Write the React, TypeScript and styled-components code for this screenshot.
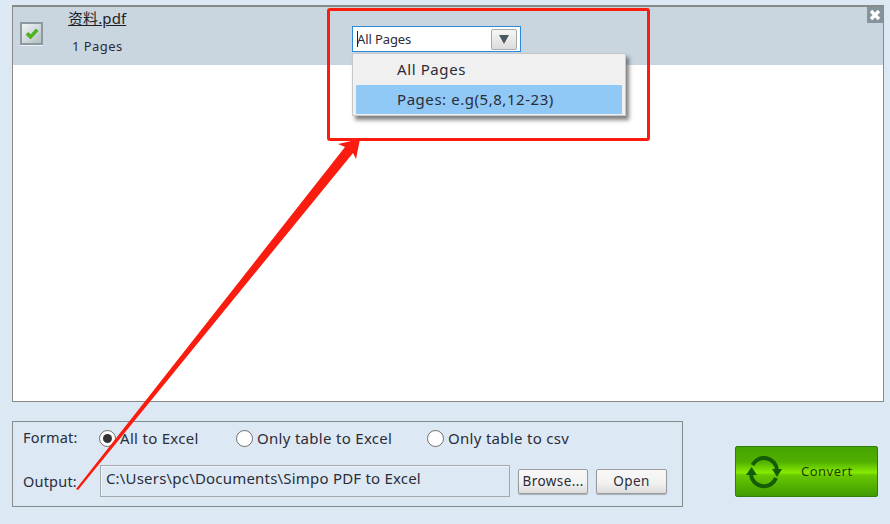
import React from 'react';
import styled, { createGlobalStyle } from 'styled-components';

const Global = createGlobalStyle`
  html, body { margin: 0; padding: 0; background: #dce9f4; }
  body { font-family: "Noto Sans", "Noto Sans CJK SC", sans-serif; color: #2c2c38; }
`;

const Page = styled.div`
  position: relative;
  width: 890px;
  height: 524px;
  overflow: hidden;
  box-sizing: border-box;
  padding: 5px 6px 0 12px;
  background: #dce9f4;
`;

const FileList = styled.div`
  height: 397px;
  box-sizing: border-box;
  background: #fff;
  border: 1px solid #8a8a8a;
  border-top-width: 2px;
`;

const FileRow = styled.div`
  position: relative;
  height: 58px;
  background: #c9d6e0;
  display: flex;
  align-items: flex-start;
`;

const CheckBox = styled.div`
  width: 23px;
  height: 23px;
  margin: 15px 0 0 7px;
  box-sizing: border-box;
  border: 2px solid #8c9aa0;
  background: linear-gradient(135deg, #f0f4f4, #b4c0c4);
  box-shadow: 0 1px 0 #eef3f6;
  display: flex;
  align-items: center;
  justify-content: center;
`;

const FileInfo = styled.div`
  margin-left: 25px;
  display: flex;
  flex-direction: column;
  align-items: flex-start;
`;

const FileName = styled.div`
  font-size: 15px;
  line-height: 18px;
  margin-top: 2px;
  color: #1e1e26;
  text-decoration: underline;
  letter-spacing: 0.1px;
`;

const PageCount = styled.div`
  font-size: 13px;
  line-height: 16px;
  margin: 11px 0 0 4px;
  letter-spacing: 0.45px;
`;

const CloseButton = styled.div`
  position: absolute;
  top: 0;
  right: 0;
  width: 16px;
  height: 16px;
  background: #85939b;
  display: flex;
  align-items: center;
  justify-content: center;
`;

const Select = styled.div`
  position: absolute;
  left: 339px;
  top: 19px;
  width: 169px;
  height: 26px;
  box-sizing: border-box;
  border: 1px solid #2a8ad8;
  background: #fff;
  display: flex;
  align-items: center;
  justify-content: space-between;
  padding: 0 3px 0 4px;
  font-size: 13px;
  letter-spacing: -0.1px;
`;

const Caret = styled.span`
  display: inline-block;
  width: 1px;
  height: 16px;
  background: #222;
  margin-right: -1px;
`;

const SelectText = styled.span`
  display: flex;
  align-items: center;
`;

const SelectArrow = styled.div`
  width: 26px;
  height: 21px;
  box-sizing: border-box;
  border: 1px solid #a8a8a8;
  border-radius: 2px;
  background: linear-gradient(#f6f6f6, #dcdcdc);
  display: flex;
  align-items: center;
  justify-content: center;
`;

const Menu = styled.div`
  position: absolute;
  left: 352px;
  top: 53px;
  width: 274px;
  height: 63px;
  box-sizing: border-box;
  background: #f0f0f0;
  border: 1px solid #c8c8c8;
  padding: 1px 3px 3px;
  box-shadow: 3px 4px 4px rgba(60, 60, 60, 0.65);
  z-index: 2;
`;

const MenuItem = styled.div<{ $active?: boolean }>`
  height: 29px;
  line-height: 29px;
  padding-left: 41px;
  font-size: 15px;
  letter-spacing: ${(p) => (p.$active ? '0.55px' : '0.6px')};
  background: ${(p) => (p.$active ? '#90c8f6' : 'transparent')};
  margin-top: ${(p) => (p.$active ? '1px' : '0')};
`;

const FormBox = styled.div`
  width: 671px;
  height: 86px;
  margin-top: 19px;
  box-sizing: border-box;
  border: 1px solid #85898c;
  padding: 3px 15px 0 10px;
  display: flex;
  flex-direction: column;
`;

const FormRow = styled.div`
  display: flex;
  align-items: center;
`;

const FormatRow = styled(FormRow)`
  height: 26px;
`;

const OutputRow = styled(FormRow)`
  height: 32px;
  margin-top: 14px;
`;

const Label = styled.div<{ $w: number; $up?: number }>`
  width: ${(p) => p.$w}px;
  font-size: 14.5px;
  letter-spacing: 0.2px;
  margin-top: ${(p) => p.$up ?? 0}px;
`;

const Radio = styled.div<{ $w: number }>`
  display: flex;
  align-items: center;
  width: ${(p) => p.$w}px;
  font-size: 15px;
  letter-spacing: 0.3px;
`;

const RadioDot = styled.span<{ $on?: boolean }>`
  width: 17px;
  height: 17px;
  box-sizing: border-box;
  margin-right: 4px;
  border-radius: 50%;
  border: 1.5px solid #6e6e6e;
  background: #fff;
  display: flex;
  align-items: center;
  justify-content: center;
  &::after {
    content: '';
    display: ${(p) => (p.$on ? 'block' : 'none')};
    width: 9px;
    height: 9px;
    border-radius: 50%;
    background: #333;
  }
`;

const PathBox = styled.div`
  width: 411px;
  height: 32px;
  box-sizing: border-box;
  border: 1px solid #a4a8ac;
  box-shadow: inset 1px 1px 0 #f2f6fa;
  background: #dce9f4;
  padding: 0 5px;
  font-size: 15px;
  line-height: 25px;
  letter-spacing: 0.2px;
  white-space: nowrap;
`;

const SmallButton = styled.div<{ $w: number }>`
  width: ${(p) => p.$w}px;
  height: 25px;
  margin-left: 8px;
  box-sizing: border-box;
  border: 1px solid #9a9a9a;
  border-radius: 2px;
  background: linear-gradient(#f8f8f8 0%, #f2f2f2 55%, #dcdcdc 100%);
  box-shadow: 0 1px 1px rgba(0, 0, 0, 0.25);
  font-size: 13.5px;
  letter-spacing: 0.4px;
  display: flex;
  align-items: center;
  justify-content: center;
`;

const ConvertButton = styled.div`
  position: absolute;
  left: 735px;
  top: 446px;
  width: 143px;
  height: 51px;
  box-sizing: border-box;
  border: 1px solid #2f7d0a;
  border-radius: 2px;
  background: linear-gradient(#45a400 0%, #50b000 30%, #86ea00 52%, #68c800 58%, #3f9c00 100%);
  display: flex;
  align-items: center;
  padding-left: 9px;
  color: #1f3c00;
  font-size: 13px;
  letter-spacing: 0.5px;
`;

const ConvertLabel = styled.span`
  margin-left: 18px;
  margin-top: -2px;
`;

const AnnotationBox = styled.div`
  position: absolute;
  left: 327px;
  top: 8px;
  width: 323px;
  height: 133px;
  box-sizing: border-box;
  border: 3px solid #fb1c10;
  border-radius: 3px;
  z-index: 3;
`;

const ArrowLayer = styled.svg`
  position: absolute;
  left: 0;
  top: 0;
  z-index: 4;
  pointer-events: none;
`;

export default function App() {
  return (
    <Page>
      <Global />
      <FileList>
        <FileRow>
          <CheckBox>
            <svg width="14" height="12" viewBox="0 0 14 12">
              <path d="M1 6.5 L3.5 4.5 L5.5 7 L11 1 L13 3 L5.5 11 Z" fill="#4cb814" stroke="#2f8a0a" strokeWidth="0.5" />
            </svg>
          </CheckBox>
          <FileInfo>
            <FileName>资料.pdf</FileName>
            <PageCount>1 Pages</PageCount>
          </FileInfo>
          <Select>
            <SelectText>
              <Caret />
              All Pages
            </SelectText>
            <SelectArrow>
              <svg width="10" height="9" viewBox="0 0 10 9">
                <path d="M0 0 H10 L5 9 Z" fill="#4a5860" />
              </svg>
            </SelectArrow>
          </Select>
          <CloseButton>
            <svg width="12" height="12" viewBox="0 0 12 12">
              <path d="M2 2 L10 10 M10 2 L2 10" stroke="#fff" strokeWidth="3.4" />
            </svg>
          </CloseButton>
        </FileRow>
      </FileList>
      <Menu>
        <MenuItem>All Pages</MenuItem>
        <MenuItem $active>Pages: e.g(5,8,12-23)</MenuItem>
      </Menu>
      <FormBox>
        <FormatRow>
          <Label $w={76} $up={-2}>Format:</Label>
          <Radio $w={137}>
            <RadioDot $on />
            All to Excel
          </Radio>
          <Radio $w={191}>
            <RadioDot />
            Only table to Excel
          </Radio>
          <Radio $w={170}>
            <RadioDot />
            Only table to csv
          </Radio>
        </FormatRow>
        <OutputRow>
          <Label $w={77}>Output:</Label>
          <PathBox>C:\Users\pc\Documents\Simpo PDF to Excel</PathBox>
          <SmallButton $w={70}>Browse...</SmallButton>
          <SmallButton $w={71}>Open</SmallButton>
        </OutputRow>
      </FormBox>
      <ConvertButton>
        <svg width="38" height="34" viewBox="0 0 38 34">
          <path d="M7.5 10 A13 13 0 0 1 32 15" fill="none" stroke="#155c08" strokeWidth="4" />
          <path d="M31 23 A13 13 0 0 1 6 20" fill="none" stroke="#155c08" strokeWidth="4" />
          <path d="M27 14 H37 L32 22 Z" fill="#155c08" />
          <path d="M1 20 H12 L6.5 12 Z" fill="#155c08" />
        </svg>
        <ConvertLabel>Convert</ConvertLabel>
      </ConvertButton>
      <AnnotationBox />
      <ArrowLayer width="890" height="524" viewBox="0 0 890 524">
        <path d="M76 489 L345 147 L338 144 L360 139 L356 159 L353 153 L78 490 Z" fill="#fb1c10" />
      </ArrowLayer>
    </Page>
  );
}
